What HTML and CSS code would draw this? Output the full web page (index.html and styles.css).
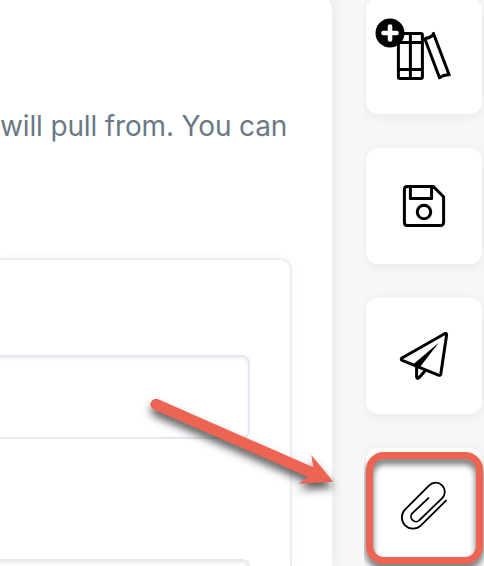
FILE: index.html
```
<!DOCTYPE html>
<html lang="en">
<head>
    <meta charset="UTF-8">
    <meta name="viewport" content="width=device-width, initial-scale=1.0">
    <title>Sources</title>
    <link rel="stylesheet" href="styles.css">
</head>
<body>
    <main class="panel">
        <p class="intro">will pull from. You can</p>
        <section class="card">
            <div class="field"></div>
            <div class="field field-next"></div>
        </section>
    </main>

    <nav class="toolbar">
        <button class="tool" aria-label="Add to library">
            <svg class="icon" viewBox="0 0 60 60">
                <rect x="4.4" y="7.6" width="24" height="44.8" rx="1.5"/>
                <path d="M16.4 7.6V52.4M4.4 16.4H28.4M4.4 43.4H28.4"/>
                <path d="M30.4 11.8L46 53M39 6.2L55.6 50M30.8 12.6C34 12.5 37 11 39.5 8.6M45.6 51.8C48 49.8 51 48.8 55.4 48.8"/>
            </svg>
            <svg class="badge" viewBox="0 0 30 30">
                <circle cx="15" cy="15" r="14.5"/>
                <path d="M15 8.5V21.5M8.5 15H21.5"/>
            </svg>
        </button>

        <button class="tool" aria-label="Save">
            <svg class="icon" viewBox="0 0 60 60">
                <path d="M13.3 10.4H39.2L49.6 20.8V46.6A3 3 0 0 1 46.6 49.6H13.3A3 3 0 0 1 10.4 46.6V13.4A3 3 0 0 1 13.3 10.4Z"/>
                <path d="M16.4 10.4V22.6H37.6V10.4"/>
                <circle cx="30" cy="36" r="6.7"/>
            </svg>
        </button>

        <button class="tool" aria-label="Send">
            <svg class="icon" viewBox="0 0 60 60">
                <path d="M50.6 7.7L8 32Q6.4 33.4 8.2 34.4L45 49.3Q46.5 49.6 46.8 48L52.6 9Q52.6 6.8 50.6 7.7Z"/>
                <path d="M22.6 40.2V51Q23.3 53.4 25 51.7L31.4 44.4"/>
                <path class="solid" d="M45 16.6L19 38.6L25.6 41.4Z"/>
            </svg>
        </button>

        <button class="tool" aria-label="Attach file">
            <svg class="icon icon-thin" viewBox="0 0 60 60">
                <path d="M52 24.6L27 49.4A11 11 0 0 1 11.2 33.4L35.2 9.4A9.1 9.1 0 0 1 48.2 22.2L25.6 44A4.9 4.9 0 0 1 18.4 37.2L34.4 22.2"/>
            </svg>
            <span class="highlight"></span>
        </button>
    </nav>

    <svg class="arrow" viewBox="0 0 200 110">
        <path d="M18.2 9.3L173.3 77.3L171.3 65L193.3 91.7L158.7 93.7L168.3 87L13.8 19.4A5.5 5.5 0 0 1 18.2 9.3Z"/>
    </svg>
</body>
</html>
```

FILE: styles.css
```
:root {
    --page-bg: #f7f7f7;
    --text-color: #6b7987;
    --accent: #ed6453;
    --field-border: #e2e8f0;
}

* {
    margin: 0;
    padding: 0;
    box-sizing: border-box;
}

html {
    overflow: hidden;
}

body {
    display: flex;
    height: 566px;
    overflow: hidden;
    position: relative;
    background: var(--page-bg);
    color: var(--text-color);
    font-family: Inter, "Liberation Sans", sans-serif;
}

.panel {
    display: flex;
    flex-direction: column;
    width: 332px;
    margin-top: -4px;
    padding-top: 113px;
    flex-shrink: 0;
    background: #fff;
    border-radius: 0 14px 0 0;
    box-shadow: 0 0 16px rgba(0, 0, 0, 0.08);
}

.intro {
    height: 34px;
    font-size: 28px;
    line-height: 34px;
    letter-spacing: -0.15px;
    white-space: nowrap;
}

.card {
    width: 292px;
    flex: 1;
    min-height: 0;
    margin-top: 115px;
    padding-top: 95px;
    overflow: hidden;
    border: 2px solid #eee;
    border-width: 2px 2px 0 0;
    border-radius: 0 12px 0 0;
    box-shadow: 0 0 14px rgba(0, 0, 0, 0.035);
}

.field {
    width: 260px;
    height: 84px;
    margin-left: -10px;
    border: 2px solid var(--field-border);
    border-radius: 8px;
    box-shadow: inset 0 2px 3px rgba(0, 0, 0, 0.07);
}

.field-next {
    height: 7px;
    margin-top: 120px;
    border-color: #e9e9e9;
    border-bottom: none;
    border-radius: 8px 8px 0 0;
}

/* Action buttons */
.toolbar {
    display: flex;
    flex-direction: column;
    gap: 34px;
    width: 120px;
    height: 568px;
    margin: -2px 0 0 32px;
    padding-left: 2px;
    flex-shrink: 0;
    overflow: hidden;
}

.tool {
    display: flex;
    align-items: center;
    justify-content: center;
    position: relative;
    width: 116px;
    height: 116px;
    flex-shrink: 0;
    border: none;
    border-radius: 12px;
    background: #fff;
    box-shadow: 0 2px 12px rgba(0, 0, 0, 0.07);
}

.icon {
    width: 60px;
    height: 60px;
    fill: none;
    stroke: #000;
    stroke-width: 3;
    stroke-linejoin: round;
}

.icon-thin {
    stroke-width: 1.8;
    stroke-linecap: round;
}

.solid {
    fill: #000;
    stroke: none;
}

.badge {
    position: absolute;
    top: 20px;
    left: 9px;
    width: 30px;
    height: 30px;
    fill: #000;
    stroke: #fff;
}

.badge circle {
    stroke: none;
}

.badge path {
    stroke-width: 4.6;
    stroke-linecap: round;
}

/* Callout frame and arrow */
.highlight {
    position: absolute;
    top: 4px;
    left: 0;
    width: 117px;
    height: 112px;
    border: 7px solid var(--accent);
    border-radius: 18px;
    filter: drop-shadow(0 5px 3px rgba(0, 0, 0, 0.6));
}

.arrow {
    position: absolute;
    top: 390px;
    left: 140px;
    width: 200px;
    height: 110px;
    overflow: visible;
    fill: var(--accent);
    filter: drop-shadow(0 6px 4px rgba(0, 0, 0, 0.65));
}
```
